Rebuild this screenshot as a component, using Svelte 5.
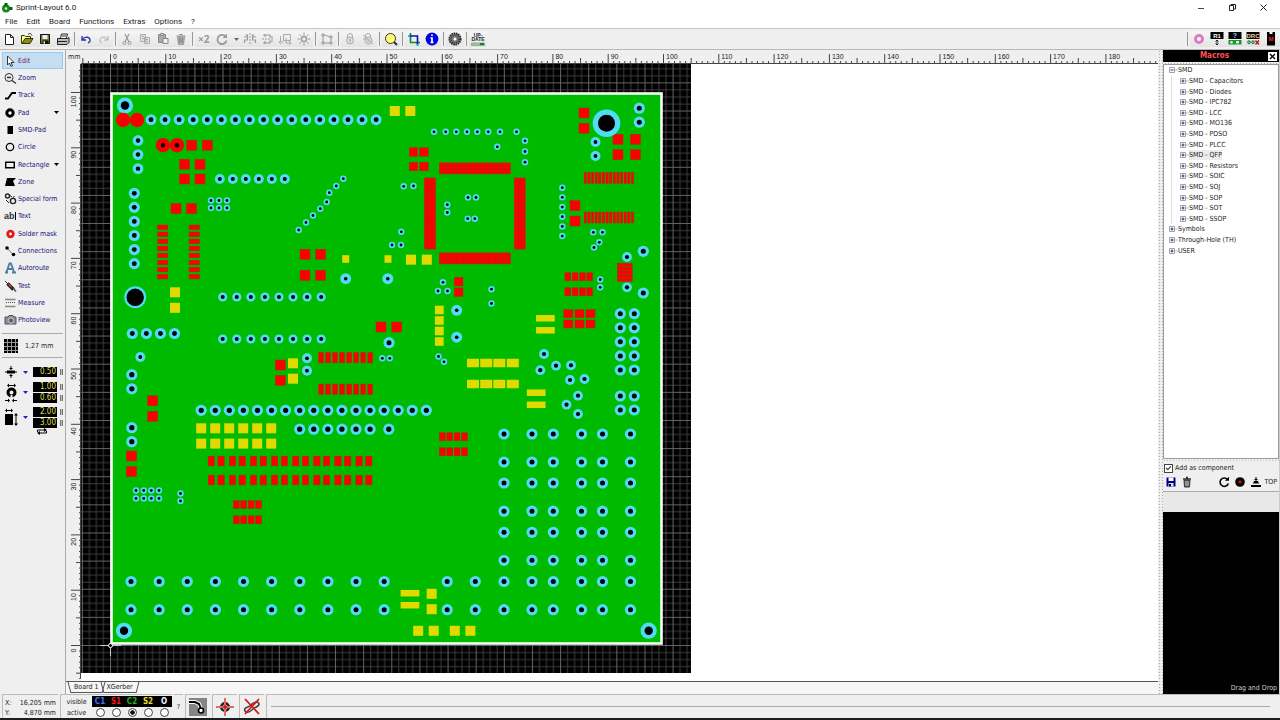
<script>
	let tool = 'Edit'
	let activeLayer = 'C2'
	let asComponent = true
	let rulerWidth = 0

	const MM = 5.53

	const menus = ['File', 'Edit', 'Board', 'Functions', 'Extras', 'Options', '?']

	// toolbar glyphs, 18 x 16 each
	const toolbar = [
		{ name: 'New', d: '<path d="M5.5 3.5h5l3 3v7h-8z" fill="#fff" stroke="#222"/><path d="M10.5 3.5v3h3" fill="none" stroke="#222"/>' },
		{ name: 'Open', d: '<path d="M3.5 12.5v-8h3l1 1h5v2" fill="#ff8" stroke="#330"/><path d="M4 12.500l3-5h8l-3 5z" fill="#8a8a20" stroke="#330"/><path d="M10 3.500c2-2 3-1 4 1" fill="none" stroke="#222"/>' },
		{ name: 'Save', d: '<path d="M4.500 3.500h9v9h-9z" fill="#77792a" stroke="#111"/><path d="M6.500 4h5v4h-5z" fill="#eee"/><path d="M6.500 9.500h6v3h-6z" fill="#111"/><path d="M7.500 10.500h1.500v2h-1.500z" fill="#fff"/>' },
		{ name: 'Print', d: '<path d="M6.500 7l1-4h6l-1 4" fill="#fff" stroke="#222"/><path d="M3.500 7.500h10l1.500-1v5l-2 2h-9.500z" fill="#bbb" stroke="#222"/><path d="M4 10.500h9M8 5h4" stroke="#222"/><path d="M9 12h2" stroke="#dd2"/>' },
		{ sep: true },
		{ name: 'Undo', d: '<path d="M5 5v4h4M5.500 8.500c2-3.500 8-3 7.500 1.500-.3 1-1 1.500-2 2" fill="none" stroke="#2730a0" stroke-width="1.300"/>' },
		{ name: 'Redo', d: '<path d="M13 5v4h-4M12.500 8.500c-2-3.500-8-3-7.500 1.500.3 1 1 1.500 2 2" fill="none" stroke="#aaa"/>' },
		{ sep: true },
		{ name: 'Cut', d: '<path d="M7 3l4 8M11 3l-4 8" stroke="#999" stroke-width="1.200"/><circle cx="6.500" cy="12" r="1.500" fill="none" stroke="#999"/><circle cx="11.500" cy="12" r="1.500" fill="none" stroke="#999"/>' },
		{ name: 'Copy', d: '<path d="M4.500 3.500h5v7h-5zM8.500 6.500h5v6h-5z" fill="#e4e4e4" stroke="#aaa"/><path d="M6 5.500h2M6 7.500h2M10 8.500h2M10 10.500h2" stroke="#aaa"/>' },
		{ name: 'Paste', d: '<path d="M4.500 3.500h7v8h-7z" fill="#aaa" stroke="#888"/><path d="M6.500 2.500h3v2h-3z" fill="#ddd" stroke="#888"/><path d="M9 7.500h5v5h-5z" fill="#eee" stroke="#888"/>' },
		{ name: 'Delete', d: '<path d="M5.500 6h7l-1 7.500h-5z" fill="#b0b0b0" stroke="#999"/><path d="M4.500 5h9M7.500 3.500h3M7.500 7v5M9 7v5M10.500 7v5" stroke="#888"/>' },
		{ sep: true },
		{ name: 'Duplicate', d: '<text x="3" y="11.500" font-size="10" font-weight="bold" fill="#999" font-family="Open Sans, sans-serif">×2</text>' },
		{ name: 'Rotate', d: '<path d="M12.500 5.500a4.600 4.600 0 1 0 1 4" fill="none" stroke="#999" stroke-width="1.800"/><path d="M14 2.500v4.500h-4.500z" fill="#999"/>' },
		{ name: 'Rotation angle', narrow: true, d: '<path d="M3 7h5l-2.500 3z" fill="#666"/>' },
		{ name: 'Mirror horizontally', d: '<path d="M9 2v12" stroke="#999" stroke-dasharray="2 1"/><path d="M3.500 12v-3h3v-5h-2M14.500 12v-3h-3v-5h2M3 6h4M11 6h4" fill="none" stroke="#999" stroke-width="1.200"/>' },
		{ name: 'Mirror vertically', d: '<path d="M3 8h12" stroke="#999" stroke-dasharray="2 1"/><path d="M4 4h7v2h3M4 12h7v-2h3M6 3v3M6 10v3" fill="none" stroke="#999" stroke-width="1.200"/>' },
		{ name: 'Align', d: '<path d="M6.500 3.500h7v6h-7zM3.500 5v6h3M9 7v5h5M12 10l2 2-2 2M4 9l-2 2 2 2" fill="none" stroke="#aaa"/>' },
		{ name: 'Snap to grid', d: '<circle cx="9" cy="8" r="2.500" fill="none" stroke="#999" stroke-width="1.300"/><path d="M9 1.500v3M9 11.500v3M2.500 8h3M12.500 8h3M4.500 3.500l2 2M13.500 3.500l-2 2M4.500 12.500l2-2M13.500 12.500l-2-2" stroke="#999"/>' },
		{ sep: true },
		{ name: 'Connect', d: '<path d="M5 4v8h8V6L6 4" fill="none" stroke="#999"/><path d="M4 3h2v2h-2zM4 11h2v2h-2zM12 5h2v2h-2zM12 11h2v2h-2z" fill="#eee" stroke="#999"/>' },
		{ sep: true },
		{ name: 'Group', d: '<path d="M6.500 7v-2a2.500 2.500 0 0 1 5 0v2" fill="none" stroke="#aaa"/><circle cx="9" cy="9.500" r="3.500" fill="#ddd" stroke="#aaa"/><path d="M9 8v3" stroke="#999"/>' },
		{ name: 'Ungroup', d: '<path d="M6.500 7v-2a2.500 2.500 0 0 1 5 0v2" fill="none" stroke="#aaa"/><circle cx="9.500" cy="9.500" r="3.500" fill="#ddd" stroke="#aaa"/><path d="M4 4l10 9M4 8h3M9 8v3" stroke="#aaa"/>' },
		{ sep: true },
		{ name: 'Zoom view', d: '<circle cx="8.500" cy="7.500" r="5" fill="#ff7" stroke="#333"/><path d="M12 11l3 3" stroke="#332" stroke-width="2"/>' },
		{ sep: true },
		{ name: 'Board outline', d: '<path d="M5.500 2v9.500h9.500" fill="none" stroke="#088a3c" stroke-width="1.600"/><path d="M3 5h9.500v9" fill="none" stroke="#11a" stroke-width="1.600"/><path d="M3 5h2M12.500 13v2" stroke="#2bd" stroke-width="2"/>' },
		{ name: 'Info', d: '<circle cx="9" cy="8" r="6.400" fill="#0000e6"/><path d="M9 6.500v5M7.500 7h2M7.500 11.500h3M9 3.500v1.600" stroke="#fff" stroke-width="1.700"/>' },
		{ sep: true },
		{ name: 'Ground plane', d: '<circle cx="9" cy="8" r="5.800" fill="#777" stroke="#222" stroke-width="1.600" stroke-dasharray="1.500 .8"/><circle cx="9" cy="8" r="4" fill="none" stroke="#333" stroke-width="1.500" stroke-dasharray="1 1"/><circle cx="9" cy="8" r="1.500" fill="#fff"/>' },
		{ sep: true },
		{ name: 'Update', d: '<text x="9" y="5.500" font-size="5" font-weight="bold" text-anchor="middle" fill="#223" font-family="Liberation Sans, sans-serif">UP-</text><text x="9" y="10" font-size="5" font-weight="bold" text-anchor="middle" fill="#223" font-family="Liberation Sans, sans-serif">DATE</text><path d="M2.500 12h13v2.500h-13z" fill="#8cc88c" stroke="#9bab9b"/><path d="M11 12h4v2h-4z" fill="#17801f"/>' }
	]

	const panels = [
		{ name: 'Transparent', d: '<circle cx="9" cy="8" r="3.500" fill="#fff" stroke="#dd7cc0" stroke-width="3"/>' },
		{ name: 'Component names', d: '<path d="M2.500 1h13v7h-13z" fill="#000"/><text x="9" y="6.800" font-size="6" font-weight="bold" text-anchor="middle" fill="#fff" font-family="Liberation Sans, sans-serif">R1</text><path d="M9 9v5M7.500 10.500l1.500-1.500 1.500 1.500M7.500 12.500l1.500 1.500 1.500-1.500" stroke="#222" fill="none"/>' },
		{ name: 'Selector', d: '<path d="M2.500 1h13v7h-13z" fill="#000"/><text x="9" y="7" font-size="7" font-weight="bold" text-anchor="middle" fill="#9cf" font-family="Liberation Sans, sans-serif">?</text><path d="M2.500 9h13v4.500h-13z" fill="#1a9434"/><circle cx="5.500" cy="11.200" r="1.300" fill="#cfc"/><path d="M10 10h3v2.500h-3z" fill="#cfc"/>' },
		{ name: 'Design rule check', d: '<path d="M2.500 1h13v7h-13z" fill="#000"/><text x="9" y="6.800" font-size="6" font-weight="bold" text-anchor="middle" fill="#fc9" font-family="Liberation Sans, sans-serif">DRC</text><path d="M2.500 9h13v4.500h-13z" fill="#cfe5cf"/><circle cx="5" cy="11.200" r="1.300" fill="none" stroke="#163"/><circle cx="9" cy="11.200" r="1.300" fill="none" stroke="#163"/><path d="M11.500 9.500l3.500 4M15 9.500l-3.500 4" stroke="#c11" stroke-width="1.300"/>' },
		{ name: 'Macro library', d: '<path d="M5 1h2.500v2h3v-2h2.500v13.500h-8z" fill="#000"/><text x="9" y="9.800" font-size="6" font-weight="bold" text-anchor="middle" fill="#f22" font-family="Liberation Sans, sans-serif">M</text>' }
	]

	const tools = [
		{ name: 'Edit', d: '<path d="M4.500 2v9l2-2 1.500 3.500 1.500-.7L8 8.500h3z" fill="#fff" stroke="#222" stroke-width=".9"/>' },
		{ name: 'Zoom', d: '<circle cx="6" cy="6.500" r="4" fill="#eee" stroke="#333"/><path d="M4 6.500h4M9 9.500l4 3" stroke="#333" stroke-width="1.300"/>' },
		{ name: 'Track', d: '<path d="M2 10.500h3l4-5.500h4" fill="none" stroke="#000" stroke-width="1.800"/>' },
		{ name: 'Pad', arrow: true, d: '<circle cx="7" cy="7" r="3.200" fill="#fff" stroke="#000" stroke-width="3"/>' },
		{ name: 'SMD-Pad', d: '<path d="M4.500 3h5.500v8h-5.500z"/>' },
		{ name: 'Circle', d: '<circle cx="7" cy="7" r="3.700" fill="none" stroke="#000" stroke-width="1.300"/>' },
		{ name: 'Rectangle', arrow: true, d: '<path d="M2.700 4.200h8.600v5.600h-8.600z" fill="none" stroke="#000" stroke-width="1.400"/>' },
		{ name: 'Zone', d: '<path d="M4 3h9l-3 3 2 5H2l1-4z"/>' },
		{ name: 'Special form', d: '<circle cx="4.500" cy="4" r="2" fill="none" stroke="#222" stroke-width="1.400"/><circle cx="10" cy="9" r="2.600" fill="none" stroke="#222" stroke-width="1.400"/><path d="M3 8l3 3M7 3.500l2 1.500M10 6l1.500-2" stroke="#222"/>' },
		{ name: 'Text', d: '<text x="1" y="10" font-size="9" font-weight="bold" fill="#333" font-family="Liberation Sans, sans-serif">ab</text><path d="M12.500 3v8" stroke="#000"/>' },
		{ name: 'Solder mask', d: '<circle cx="7.500" cy="7" r="2.800" fill="#fff" stroke="#e01818" stroke-width="2.800"/>' },
		{ name: 'Connections', d: '<path d="M4 4l6 6.500" stroke="#777"/><circle cx="4" cy="4" r="1.800"/><circle cx="10.500" cy="10.500" r="1.800"/>' },
		{ name: 'Autoroute', d: '<path d="M2 11.500h3M9 11.500h4M3.500 11l3-8.500h1.500l3 8.500M5 8h5" fill="none" stroke="#4b7fa5" stroke-width="1.900"/>' },
		{ name: 'Test', d: '<path d="M2 2l4 4" stroke="#333"/><path d="M4.500 4.500l6 6" stroke="#222" stroke-width="3.500"/><path d="M5.500 5l3 3" stroke="#b44" stroke-width="1.400"/><path d="M10 9l3 3.500" stroke="#363" stroke-width="1.500"/>' },
		{ name: 'Measure', d: '<path d="M2 3.500h10.500M2 10.500h10.500" stroke="#888" stroke-width="1.500"/><path d="M3 6.500h9" stroke="#555" stroke-dasharray="1 1"/>' },
		{ name: 'Photoview', d: '<path d="M2 4h3l1-1.500h4l1 1.500h2v7h-11z" fill="#8b8f94" stroke="#555"/><circle cx="8" cy="7.500" r="2.700" fill="#567" stroke="#ccd"/>' }
	]

	const tree = [
		{ name: 'SMD', open: true },
		...['Capacitors', 'Diodes', 'IPC782', 'LCC', 'MO136', 'PDSO', 'PLCC', 'QFP', 'Resistors', 'SOIC', 'SOJ', 'SOP', 'SOT', 'SSOP'].map((n) => ({ name: 'SMD - ' + n, child: true, hover: n === 'QFP' })),
		{ name: 'Symbols' },
		{ name: 'Through-Hole (TH)' },
		{ name: 'USER' }
	]

	const layers = [
		{ id: 'C1', color: '#3a78ff' },
		{ id: 'S1', color: '#f01818' },
		{ id: 'C2', color: '#18b818' },
		{ id: 'S2', color: '#e6dc30' },
		{ id: 'O', color: '#ffffff' }
	]

	const seq = (n, start, step) => Array.from({ length: n }, (_, i) => start + i * step)
	const cross = (xs, ys) => ys.flatMap((y) => xs.map((x) => [x, y]))
	const P = 14.07

	// [points, outer radius, hole radius]
	const padGroups = [
		[cross(seq(17, 151, P), [119.7]), 5.5, 2.4],
		[cross([138], seq(3, 140.5, P)), 5.4, 2.2],
		[cross(seq(6, 219.8, 13), [179]), 5, 2],
		[cross([134.3], seq(6, 193.3, P)), 5.6, 2.4],
		[cross(seq(4, 132.3, P), [333.5]), 5.6, 2.4],
		[cross(seq(8, 222.7, P), [297, 339]), 4.6, 2],
		[[[140.3, 357], [307, 358.3], [307, 370.7], [595.5, 142], [595.5, 156]], 5, 1.9],
		[cross([131.8], [374.7, 388.8, 427.7, 441.7]), 5.6, 2.6],
		[cross(seq(17, 201.2, P), [410.3]), 5.6, 2.6],
		[cross([...seq(6, 299.7, P), 388.8], [429.2]), 5.6, 2.6],
		[[[345.7, 278.7], [387.8, 278.7], [456.7, 310.3], [456.7, 337.2]], 5.5, 1.8],
		[[[389, 342.7], [639.3, 108.2], [639.3, 122.2], [643.3, 251.3], [643.3, 293]], 5.6, 2.5],
		[[[627, 257], [627, 287.3], [544, 354], [540.3, 370.2], [556, 365.7], [571, 365.3], [570, 380], [584.5, 379], [578, 395.7], [566.5, 404.7], [578, 414]], 4.9, 2.1],
		[cross([620.3, 634.3], [...seq(5, 313.7, P), 396, 410]), 5.6, 2.5],
		[cross(seq(10, 131, 28.13), [581.5, 609.7]), 5.6, 2.5],
		[cross([447.2, 475.3], [581.5, 609.7]), 5.6, 2.5],
		[cross([504, 532, 553.3, 581.5, 602.5, 630.5], [434, 462, 483, 511.2, 532.3, 560.3, 581.5, 609.7]), 5.6, 2.5],
		[[[125, 105.5], [124, 630.8], [648.7, 630.7]], 8.1, 4.2],
		[[[135.2, 297.3]], 11, 8.7],
		[[[606.5, 123.2]], 13.8, 8.5],
		// vias
		[[
			...cross([211, 219, 227], [200.5, 208]),
			...cross([136, 143.7, 151.3, 159], [490.5, 498.4]),
			[180.5, 493.5], [180.5, 501],
			[298.7, 230], [306, 222.5], [313, 215.5], [320.3, 208.7], [326.7, 202], [329.3, 192.7], [336.3, 186], [343.3, 178.7],
			[403.7, 186.3], [413.5, 186], [401.3, 231.8], [392, 245], [401, 245],
			...cross([434, 445.7, 456.3, 467, 477.3, 488.3, 500, 516.5], [131.8]),
			[497.3, 146.8], [525, 140.8], [525, 151.5], [525, 162.2],
			[468, 197.5], [476, 197.5], [447.3, 204.7], [447.3, 212.5], [467.7, 218.7], [474.8, 218.7],
			...cross([562.3], seq(6, 187.7, 9.67)),
			[593.3, 232.3], [602.5, 232.3], [599.3, 242.3], [594, 247.5],
			[600.2, 279.5], [600.2, 287.3], [443, 282.3], [438, 291], [447.5, 291],
			[491.5, 289.2], [491.5, 303.5], [382.3, 358.3], [389.8, 358.3], [438.5, 356.5], [444, 361.8]
		], 3.2, 1.4]
	]
	const pads = padGroups.flatMap(([pts, r, hole]) => pts.map(([x, y]) => ({ x, y, r, hole })))

	// [colour, centre points, width, height]
	const smdGroups = [
		['r', cross([191.7, 207.3], [145.3]), 10, 10],
		['r', cross([184.5, 200], [164.3, 179]), 10, 10],
		['r', cross([176, 191.5], [208.5]), 10, 10],
		['r', cross([162.7, 194.2], seq(8, 227.3, 7.05)), 10.3, 4.6],
		['r', cross([152.7], [400.8, 416.3]), 10, 10],
		['r', cross([131.5], [456, 471.5]), 10, 10],
		['r', cross([305, 320.5], [254.3, 275.3]), 10, 10],
		['r', cross([413.5, 424], [152, 166.5]), 8.5, 8.5],
		['r', cross([584], [113, 128.2]), 10, 10],
		['r', cross([618, 635.5], [139.3, 154.7]), 10, 10],
		['r', cross([575], [205.7, 221]), 10, 10],
		['r', cross(seq(14, 585.3, 3.63), [178, 217.5]), 2.3, 11],
		['r', cross(seq(4, 567.8, 7.3), [276.8, 291.8]), 5.8, 8],
		['r', cross([568.3, 579.5, 590.5], [313.7, 324]), 9, 8],
		['r', cross([458.7], [281.7, 292.2]), 8.5, 8.5],
		['r', cross([381, 396.7], [327]), 10, 10],
		['r', cross(seq(8, 321, 7.03), [357.7, 389.2]), 4.7, 10.3],
		['r', cross([280.4], [365, 380.3]), 10, 10],
		['r', cross([...seq(8, 211.3, P * 1.5), ...seq(8, 221.1, P * 1.5)], [461, 480]), 6.3, 9.7],
		['r', cross(seq(4, 236.3, 7.4), [504.7, 519.8]), 5.8, 8],
		['r', cross(seq(4, 442.3, 7.4), [436.8, 451.8]), 5.8, 8],
		['y', cross([394.8, 410.3], [111]), 10, 10],
		['y', cross([175], [292.3, 307.8]), 10, 10],
		['y', cross([345.7, 388], [259]), 7, 7.6],
		['y', cross([411, 426.8], [259.7]), 10, 10],
		['y', cross([439.3], seq(4, 310, 10.5)), 8.8, 8.6],
		['y', cross([545.4], [318.3, 330.3]), 18.7, 6.5],
		['y', cross([536.2], [392.7, 404.8]), 18.7, 6.5],
		['y', cross([473, 486.2, 499.3, 512.8], [363, 384]), 12, 8.5],
		['y', cross([293], [363.3, 378.7]), 10, 10],
		['y', cross(seq(6, 201.2, 14), [428.3, 443.6]), 10, 10],
		['y', cross([410], [593.2, 605.2]), 18.7, 6.5],
		['y', cross([431.7], [593.8, 609.2]), 10, 10],
		['y', cross([418.2, 433.7, 454.8, 470.4], [630.8]), 10, 10],
		// quad flat pack
		['r', cross(seq(20, 441, 3.56), [168.4, 258.4]), 3.5, 11],
		['r', cross([430, 519.7], seq(20, 179.7, 3.56)), 11, 3.5],
		['r', cross([624.8], seq(5, 265, 3.7)), 15, 3.3]
	]
	const smds = smdGroups.flatMap(([c, pts, w, h]) => pts.map(([x, y]) => ({ c, x, y, w, h })))

	const len = (i, a, b, c) => (i % 10 === 0 ? a : i % 5 === 0 ? b : c)
	// the last label has to fit in front of the ruler's end
	$: ticksX = seq(Math.max(0, Math.floor((rulerWidth - 30) / MM) + 6), -5, 1)
		.map((i) => ({ i, x: 29.5 + i * MM, l: len(i, 9, 5, 2) }))
		.map((t) => ({ ...t, label: t.i % 10 === 0 && t.x + 16 < rulerWidth }))
	const ticksY = seq(111, -6, 1).map((i) => ({ i, y: 581.5 - i * MM, l: len(i, 10, 5, 2) }))
</script>

<div class="window">
	<header class="title">
		<svg width="12" height="12" viewBox="0 0 12 12"><circle cx="5" cy="6.500" r="4" fill="#16891c" /><path d="M3.500 1h3v3h-3zM8 5h3.500v3h-3.500z" fill="#0c5f13" /><circle cx="5" cy="6.500" r="1.300" fill="#d8f5d8" /></svg>
		<span>Sprint-Layout 6.0</span>
		<div class="winbtns">
			<button aria-label="Minimize"><svg width="9" height="9"><path d="M1 5.500h6" stroke="#444" /></svg></button>
			<button aria-label="Restore"><svg width="9" height="9" fill="none" stroke="#222"><path d="M1.500 2.500h4v5h-4zM3 2.500v-1h4.500v4.500h-2" /></svg></button>
			<button aria-label="Close window"><svg width="9" height="9"><path d="M1.500 1.500l6 6M7.500 1.500l-6 6" stroke="#222" /></svg></button>
		</div>
	</header>

	<nav class="menu">
		{#each menus as m}<button>{m}</button>{/each}
	</nav>

	<div class="toolbar">
		{#each toolbar as t}
			{#if t.sep}
				<i class="sep"></i>
			{:else}
				<button aria-label={t.name}><svg width={t.narrow ? 10 : 18} height="16">{@html t.d}</svg></button>
			{/if}
		{/each}
		<div class="right">
			<i class="sep"></i>
			{#each panels as t}
				<button aria-label={t.name}><svg width="18" height="16">{@html t.d}</svg></button>
			{/each}
		</div>
	</div>

	<main>
		<aside class="side">
			<div class="tools">
				{#each tools as t}
					<button class:selected={tool === t.name} on:click={() => (tool = t.name)}>
						<svg width="14" height="14">{@html t.d}</svg>
						<span>{t.name}</span>
						{#if t.arrow}<svg class="arrow" width="5" height="3"><path d="M0 0h5l-2.500 3z" /></svg>{/if}
					</button>
				{/each}
			</div>
			<button class="gridsize">
				<svg width="14" height="14"><path d="M0 0h14v14h-14z" /><path d="M3.500 0v14M7.500 0v14M11.500 0v14M0 3.500h14M0 7.500h14M0 11.500h14" stroke="#999" /></svg>
				<span>1,27 mm</span>
			</button>
			<div class="sizes">
				<div class="size">
					<svg width="14" height="12"><path d="M1 6h12M7 0v3M7 9v3" stroke="#000" /><path d="M3 4.500h8v3h-8zM5 2h4l-2 2zM5 10h4l-2-2z" /></svg>
					<svg class="blue" width="5" height="3"><path d="M0 0h5l-2.500 3z" /></svg>
					<div class="vals"><label><input aria-label="Track width" value="0.50" /><i></i></label></div>
				</div>
				<div class="size">
					<svg width="14" height="20"><path d="M4 2.500h7M1 17.500h4M9 17.500h4" stroke="#000" /><path d="M3 2.500l2-2v4zM12 2.500l-2-2v4zM6 17.500l-2-2v4zM8 17.500l2-2v4z" /><circle cx="7.500" cy="9.500" r="3.500" fill="none" stroke="#000" stroke-width="3" /><path d="M6.500 12h2v3h-2z" fill="#efefef" /></svg>
					<svg class="blue" width="5" height="3"><path d="M0 0h5l-2.500 3z" /></svg>
					<div class="vals">
						<label><input aria-label="Pad diameter" value="1.00" /><i></i></label>
						<label><input aria-label="Drill diameter" value="0.60" /><i></i></label>
					</div>
				</div>
				<div class="size">
					<svg width="14" height="20"><path d="M1 6h8v11h-8z" /><path d="M2 2.500h6M12 7v9" stroke="#000" /><path d="M1 2.500l2-2v4zM9 2.500l-2-2v4zM12 5l-2 2.500h4zM12 18l-2-2.500h4z" /></svg>
					<svg class="blue" width="5" height="3"><path d="M0 0h5l-2.500 3z" /></svg>
					<div class="vals">
						<label><input aria-label="SMD width" value="2.00" /><i></i></label>
						<label><input aria-label="SMD height" value="3.00" /><i></i></label>
					</div>
				</div>
				<button class="swap" aria-label="Swap width and height"><svg width="14" height="7"><path d="M2.500 4v-2h8M11.500 3v2h-8" fill="none" stroke="#000" /><path d="M9 0l3 2-3 2zM5 3l-3 2 3 2z" /></svg></button>
			</div>
		</aside>

		<section class="work">
			<div class="unit">mm</div>
			<svg class="rulertop">
				{#each ticksX as t}
					<path d="M{t.x} {13 - t.l}v{t.l}" />
					{#if t.label}<text x={t.x + 2.5} y="9">{t.i}</text>{/if}
				{/each}
				<path class="base" d="M0 13.500h{rulerWidth}" />
			</svg>
			<svg class="rulerleft">
				{#each ticksY as t}
					<path d="M{15 - t.l} {t.y}h{t.l}" />
					{#if t.i % 10 === 0}<text transform="translate(10 {t.y + 3}) rotate(-90)" text-anchor="end">{t.i}</text>{/if}
				{/each}
				<path class="base" d="M14.500 0v614" />
			</svg>
			<div class="canvas" bind:clientWidth={rulerWidth}>
				<svg width="610" height="609" viewBox="81 64 610 609">
					<defs>
						<pattern id="grid" x="110" y="645" width="28.130" height="28.130" patternUnits="userSpaceOnUse">
							<path d="M7.500 0v28.130M14.500 0v28.130M21.500 0v28.130M0 7.500h28.130M0 14.500h28.130M0 21.500h28.130" stroke="#3c3c3c" />
							<path d="M.5 0v28.130M0 .5h28.130" stroke="#666" />
						</pattern>
					</defs>
					<rect x="81" y="64" width="610" height="609" />
					<rect x="81" y="64" width="610" height="609" fill="url(#grid)" />
					<rect x="111.500" y="93.500" width="550" height="550" fill="#00ba00" stroke="#f6fff6" stroke-width="2.600" />
					{#each smds as s}
						<rect class={s.c} x={s.x - s.w / 2} y={s.y - s.h / 2} width={s.w} height={s.h} />
					{/each}
					{#each pads as p}
						<circle cx={p.x} cy={p.y} r={p.r} fill="#50dcf5" />
						<circle cx={p.x} cy={p.y} r={p.hole} />
					{/each}
					<g fill="#f80000">
						<circle cx="123" cy="120" r="7.200" /><circle cx="137" cy="120" r="7.200" />
						<circle cx="163" cy="145.200" r="7.200" /><circle cx="177" cy="145.200" r="7.200" />
					</g>
					<circle cx="163" cy="145.200" r="2.200" /><circle cx="177" cy="145.200" r="2.200" />
					<path d="M100 645.500h21M110.500 634v22" stroke="#ccc" />
					<circle cx="110.500" cy="645.500" r="2" stroke="#fff" />
				</svg>
			</div>
			<div class="tabs">
				<button class="tab">Board 1</button>
				<button class="tab">XGerber</button>
			</div>
		</section>

		<aside class="macros">
			<div class="head">
				<h2>Macros</h2>
				<button aria-label="Close macros"><svg width="9" height="9"><path d="M2 2l5 5M7 2l-5 5" stroke="#000" stroke-width="1.300" /></svg></button>
			</div>
			<div class="treebox">
				<ul>
					{#each tree as n}
						<li class:child={n.child}>
							<svg width="10" height="10"><path d="M7 5h3" stroke="#bbb" /><path d="M1.500 2.500h5v5h-5z" fill="#fff" stroke="#9aa3b5" /><path d={n.open ? 'M2.500 5h3' : 'M2.500 5h3M4 3.500v3'} stroke="#334" /></svg>
							<span class:hover={n.hover}>{n.name}</span>
						</li>
					{/each}
				</ul>
			</div>
			<div class="dots"></div>
			<label class="check"><input type="checkbox" bind:checked={asComponent} />Add as component</label>
			<div class="macrobar">
				<button aria-label="Save macro"><svg width="12" height="12"><path d="M1.500 1.500h9v9h-9z" fill="#00008c" /><path d="M3.500 1.500h5v3.500h-5z" fill="#fff" /><path d="M3.500 7h5v3.500h-5z" fill="#dde" /><path d="M4 8h2v2.500h-2z" fill="#003" /></svg></button>
				<button aria-label="Delete macro"><svg width="12" height="12"><path d="M3 4h6l-.5 7h-5z" fill="#666" stroke="#333" /><path d="M2 3h8M5 1.500h2" stroke="#333" stroke-width="1.300" /><path d="M5 5v5M7 5v5" stroke="#bbb" /></svg></button>
				<span class="grow"></span>
				<button aria-label="Rotate macro"><svg width="12" height="12"><path d="M9.500 3.500a4.200 4.200 0 1 0 .8 4" fill="none" stroke="#000" stroke-width="1.600" /><path d="M11 .8v4h-4z" /></svg></button>
				<button aria-label="Through-hole"><svg width="12" height="12"><circle cx="6" cy="6" r="4.800" /><circle cx="6" cy="6" r="1.500" fill="#d01818" /></svg></button>
				<button class="top"><svg width="12" height="12"><path d="M1 9h10v2h-10zM3 7.500l1-2.500h4l1 2.500zM5.500 1h1v3h-1zM4 3h4l-2 2z" /></svg>TOP</button>
			</div>
			<div class="strip"></div>
			<div class="preview">Drag and Drop</div>
		</aside>
	</main>

	<footer>
		<dl class="coords">
			<dt>X:</dt><dd>16,205 mm</dd>
			<dt>Y:</dt><dd>4,870 mm</dd>
		</dl>
		<div class="layers">
			<span>visible</span>
			{#each layers as l}<button class="layer" style="color: {l.color}">{l.id}</button>{/each}
			<span>active</span>
			{#each layers as l}<label><input type="radio" name="layer" aria-label={l.id} value={l.id} bind:group={activeLayer} /></label>{/each}
		</div>
		<button class="help">?</button>
		<button class="mode" aria-label="Capture mode"><svg width="18" height="18"><path d="M0 0h18v18h-18z" fill="#858585" /><path d="M0 4h6l4 2 2 5" fill="none" stroke="#fff" stroke-width="4" /><path d="M0 4h6l4 2 2 5" fill="none" stroke="#000" stroke-width="2" /><circle cx="12" cy="12.500" r="2.500" fill="#fff" stroke="#000" stroke-width="1.600" /></svg></button>
		<button class="mode" aria-label="Crosshair"><svg width="18" height="18"><circle cx="9" cy="9" r="3.800" fill="none" stroke="#222" stroke-width="2.500" /><path d="M9 0v18M0 9h18" stroke="#df6a6a" stroke-width="2" /><circle cx="9" cy="9" r="2" fill="#c22" /></svg></button>
		<button class="mode" aria-label="Rubberband off"><svg width="18" height="18"><path d="M2 13c-2-4 4-3 6-6s8-4 8-1-4 3-6 5-6 5-8 2z" fill="none" stroke="#444" stroke-width="1.600" /><path d="M2 1l14 15M16 1l-14 15" stroke="#e01414" stroke-width="1.800" /></svg></button>
		<div class="hint"><hr /></div>
	</footer>
</div>

<style>
	:global(body) {
		background: #efefef;
		color: #222;
		font: 7px/10px 'DejaVu Sans Condensed', 'DejaVu Sans', sans-serif;
	}
	button,
	input {
		margin: 0;
		padding: 0;
		border: 0;
		background: none;
		color: inherit;
		font: inherit;
	}
	svg {
		display: block;
		flex: none;
	}
	.window {
		display: flex;
		flex-direction: column;
		box-sizing: border-box;
		min-height: 100vh;
		border-bottom: 2px solid #1c1c1c;
	}
	.title {
		display: flex;
		align-items: center;
		gap: 3px;
		height: 15px;
		padding-left: 1px;
		background: #fff;
		font-family: Roboto, sans-serif;
		font-size: 8px;
	}
	.winbtns {
		display: flex;
		gap: 22px;
		margin-left: auto;
		padding-right: 12px;
	}
	.menu {
		display: flex;
		gap: 9px;
		height: 13px;
		padding-left: 5px;
		background: #fff;
		font-family: Roboto, sans-serif;
		font-size: 8px;
	}
	.toolbar {
		display: flex;
		align-items: center;
		height: 20px;
		border-top: 1px solid #c8c8c8;
		border-bottom: 1px solid #b8b8b8;
	}
	.toolbar button {
		background: linear-gradient(#f6f6f6, #e4e4e4);
	}
	.right {
		display: flex;
		align-items: center;
		margin-left: auto;
	}
	.sep {
		width: 1px;
		height: 14px;
		margin: 0 2px;
		background: #999;
	}
	main {
		flex: 1;
		display: grid;
		grid-template-columns: 65px 1fr 122px;
	}

	.side {
		padding: 2px 2px 0;
		color: #14147a;
	}
	.tools {
		display: grid;
		grid-auto-rows: 1fr;
		min-height: 277px;
		padding-bottom: 4px;
		border-bottom: 1px solid #aaa;
	}
	.tools button {
		display: flex;
		align-items: center;
		gap: 1px;
		text-align: left;
		white-space: nowrap;
		border: 1px solid transparent;
	}
	.tools .selected {
		background: #c3def3;
		border-color: #9ccaec;
		color: #6b1d5e;
	}
	.arrow {
		margin-left: auto;
		margin-right: 3px;
	}
	.gridsize {
		display: flex;
		align-items: center;
		gap: 7px;
		width: 100%;
		height: 24px;
		padding-left: 2px;
		border-bottom: 1px solid #aaa;
		color: #222;
	}
	.sizes {
		padding: 8px 0 0 2px;
	}
	.size {
		display: flex;
		align-items: center;
		gap: 5px;
	}
	.size + .size {
		margin-top: 4px;
	}
	.blue {
		fill: #2222cc;
	}
	.vals {
		display: grid;
		gap: 1px;
	}
	.vals label {
		display: flex;
		align-items: center;
		gap: 3px;
	}
	.vals input {
		box-sizing: border-box;
		width: 24px;
		height: 10px;
		padding-right: 1px;
		background: #000;
		color: #dede5a;
		font-size: 8px;
		text-align: right;
	}
	.vals i {
		width: 1px;
		height: 6px;
		border: 1px solid #777;
		border-block: 0;
		background: #bbb;
	}
	.swap {
		display: block;
		margin-left: 31px;
	}

	.work {
		display: grid;
		grid-template: 14px 1fr 13px / 15px 1fr;
		min-width: 0;
		border-left: 1px solid #aaa;
	}
	.unit {
		padding: 2px 0 0 2px;
	}
	.rulertop {
		width: 100%;
		height: 14px;
	}
	.rulerleft {
		width: 15px;
		height: 615px;
	}
	.rulertop path,
	.rulerleft path {
		stroke: #444;
	}
	.rulertop text,
	.rulerleft text {
		font: 7px 'Liberation Sans', sans-serif;
		fill: #222;
	}
	.canvas {
		overflow: hidden;
		background: #fff;
	}
	.r {
		fill: #fa0000;
		stroke: #c02000;
		stroke-width: 0.5;
	}
	.y {
		fill: #e0da00;
	}
	.tabs {
		grid-column: 1 / -1;
		display: flex;
		gap: 2px;
		padding-left: 5px;
		border-top: 1px solid #555;
		background: #f6f6f6;
	}
	.tab {
		position: relative;
		height: 11px;
		padding: 0 3px;
		border-bottom: 1px solid #555;
		white-space: nowrap;
	}
	.tab::before,
	.tab::after {
		content: '';
		position: absolute;
		top: 0;
		left: -2px;
		height: 11px;
		border-left: 1px solid #555;
		transform: skewX(15deg);
	}
	.tab::after {
		left: auto;
		right: -2px;
		transform: skewX(-15deg);
	}

	.macros {
		display: flex;
		flex-direction: column;
		padding-left: 5px;
		border-right: 1px solid #ccc;
		background: radial-gradient(#aaa 25%, transparent 30%) 0 0 / 3px 3px;
	}
	.macros > * {
		background-color: #efefef;
	}
	.macros .head {
		display: flex;
		align-items: center;
		height: 12px;
		margin-bottom: 2px;
		padding-right: 2px;
		background-color: #000;
	}
	h2 {
		flex: 1;
		margin: 0;
		padding-right: 2px;
		color: #ff5050;
		font-size: 8px;
		text-align: center;
	}
	.head button {
		background: #fff;
	}
	.macros .treebox {
		flex: 13 1 0;
		border: 1px solid #999;
		background: #fff;
	}
	ul {
		display: grid;
		grid-auto-rows: 1fr;
		min-height: 191px;
		margin: 0;
		padding: 0 0 0 4px;
		list-style: none;
	}
	li {
		display: flex;
		align-items: center;
		white-space: nowrap;
	}
	.child {
		margin-left: 3px;
		padding-left: 7px;
		border-left: 1px solid #ddd;
	}
	.hover {
		background: #ececec;
	}
	.macros .dots {
		height: 4px;
		background: radial-gradient(#bbb 25%, #efefef 30%) 0 0 / 3px 3px;
	}
	.check {
		display: flex;
		align-items: center;
		gap: 2px;
		height: 11px;
		padding-left: 1px;
	}
	.check input {
		appearance: none;
		box-sizing: border-box;
		width: 9px;
		height: 9px;
		border: 1px solid #444;
		background: #fff;
	}
	.check input:checked::before {
		content: '';
		display: block;
		width: 4px;
		height: 2px;
		margin: 1px;
		border: solid #333;
		border-width: 0 0 1px 1px;
		transform: rotate(-45deg);
	}
	.macrobar {
		display: flex;
		align-items: center;
		gap: 4px;
		height: 17px;
		padding: 0 2px;
	}
	.grow {
		flex: 1;
	}
	.top {
		display: flex;
		align-items: center;
		gap: 2px;
	}
	.macros .strip {
		height: 20px;
		border-top: 1px solid #aaa;
		background: #e8e8e8;
	}
	.macros .preview {
		flex: 6 1 0;
		display: flex;
		align-items: flex-end;
		justify-content: flex-end;
		padding: 0 2px 1px;
		background: #000;
		color: #ccc;
	}

	footer {
		display: flex;
		height: 24px;
		gap: 2px;
		padding-left: 2px;
	}
	footer > * {
		border: solid #bbb;
		border-width: 1px 0 0 1px;
	}
	.coords {
		display: grid;
		grid-template-columns: auto 1fr;
		align-content: end;
		box-sizing: border-box;
		width: 56px;
		margin: 0;
		padding: 0 2px;
	}
	dd {
		margin: 0;
		text-align: right;
	}
	.layers {
		display: grid;
		grid-template-columns: 31px repeat(5, 16px);
		grid-template-rows: 11px 11px;
		padding-top: 1px;
		align-items: center;
		justify-items: center;
	}
	.layer {
		width: 16px;
		height: 11px;
		background: #000;
		font-size: 8px;
		font-weight: bold;
	}
	.layers input {
		appearance: none;
		box-sizing: border-box;
		display: block;
		width: 9px;
		height: 9px;
		border: 1px solid #444;
		border-radius: 50%;
		background: #fff;
	}
	.layers input:checked {
		background: radial-gradient(#111 40%, #fff 50%);
	}
	.help {
		width: 9px;
		border-left: 0;
	}
	.mode {
		display: flex;
		align-items: center;
		justify-content: center;
		width: 25px;
	}
	.hint {
		flex: 1;
		display: flex;
		align-items: center;
	}
	hr {
		flex: 1;
		margin: 0 10px 0 4px;
		border: 0;
		border-top: 1px solid #aaa;
	}
</style>
